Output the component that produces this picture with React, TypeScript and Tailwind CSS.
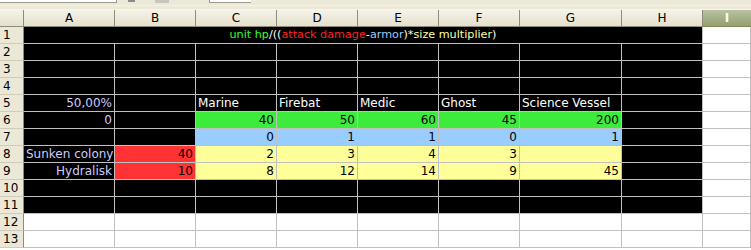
import React from "react";

type C = { t?: string; bg?: string; fg?: string; r?: boolean };

const BLACK = "bg-black";
const GREEN = "bg-[#3deb3d]";
const BLUE = "bg-[#99ccff]";
const YELLOW = "bg-[#ffff99]";
const RED = "bg-[#ff3333]";
const LAV = "text-[#ccccff]";
const WH = "text-white";
const BK = "text-black";

const blackRow = (): C[] => Array.from({ length: 8 }, () => ({ bg: BLACK }));

const rows: C[][] = [
  [], // row 1 merged title
  blackRow(),
  blackRow(),
  blackRow(),
  [
    { t: "50,00%", bg: BLACK, fg: LAV, r: true },
    { bg: BLACK },
    { t: "Marine", bg: BLACK, fg: WH },
    { t: "Firebat", bg: BLACK, fg: WH },
    { t: "Medic", bg: BLACK, fg: WH },
    { t: "Ghost", bg: BLACK, fg: WH },
    { t: "Science Vessel", bg: BLACK, fg: WH },
    { bg: BLACK },
  ],
  [
    { t: "0", bg: BLACK, fg: LAV, r: true },
    { bg: BLACK },
    { t: "40", bg: GREEN, fg: BK, r: true },
    { t: "50", bg: GREEN, fg: BK, r: true },
    { t: "60", bg: GREEN, fg: BK, r: true },
    { t: "45", bg: GREEN, fg: BK, r: true },
    { t: "200", bg: GREEN, fg: BK, r: true },
    { bg: BLACK },
  ],
  [
    { bg: BLACK },
    { bg: BLACK },
    { t: "0", bg: BLUE, fg: BK, r: true },
    { t: "1", bg: BLUE, fg: BK, r: true },
    { t: "1", bg: BLUE, fg: BK, r: true },
    { t: "0", bg: BLUE, fg: BK, r: true },
    { t: "1", bg: BLUE, fg: BK, r: true },
    { bg: BLACK },
  ],
  [
    { t: "Sunken colony", bg: BLACK, fg: LAV, r: true },
    { t: "40", bg: RED, fg: BK, r: true },
    { t: "2", bg: YELLOW, fg: BK, r: true },
    { t: "3", bg: YELLOW, fg: BK, r: true },
    { t: "4", bg: YELLOW, fg: BK, r: true },
    { t: "3", bg: YELLOW, fg: BK, r: true },
    { bg: YELLOW },
    { bg: BLACK },
  ],
  [
    { t: "Hydralisk", bg: BLACK, fg: LAV, r: true },
    { t: "10", bg: RED, fg: BK, r: true },
    { t: "8", bg: YELLOW, fg: BK, r: true },
    { t: "12", bg: YELLOW, fg: BK, r: true },
    { t: "14", bg: YELLOW, fg: BK, r: true },
    { t: "9", bg: YELLOW, fg: BK, r: true },
    { t: "45", bg: YELLOW, fg: BK, r: true },
    { bg: BLACK },
  ],
  blackRow(),
  blackRow(),
  Array.from({ length: 8 }, () => ({ bg: "bg-white" })),
  Array.from({ length: 8 }, () => ({ bg: "bg-white" })),
];

const GRID =
  "grid grid-cols-[24px_91px_81px_81px_81px_81px_81px_102px_81px_1fr]";
const BASE =
  "h-[17px] border-r border-b border-[#c0c0c0] px-[2px] leading-[16px] whitespace-nowrap overflow-visible";
const CELL = `${BASE} text-[12px]`;
const TITLE = `${BASE} text-[11.2px] col-span-8 bg-black text-center`;
const ROWHEAD =
  "h-[17px] border-r border-r-[#8e8b7c] border-b border-b-[#cfcbb8] bg-[#ebe8d7] pl-[3px] text-[12px] leading-[16px] text-black";

export default function App() {
  const letters = ["A", "B", "C", "D", "E", "F", "G", "H"];
  return (
    <div
      className="w-[751px] h-[250px] overflow-hidden bg-white"
      style={{ fontFamily: '"DejaVu Sans", sans-serif' }}
    >
      {/* toolbar remnant */}
      <div className="relative h-[10px] bg-[#ece9d8] border-b border-[#f6f4ec]">
        <div className="absolute left-0 top-0 w-[117px] h-[3px] bg-white border-b border-r border-[#9a9a90]" />
        <div className="absolute left-[128px] top-0 w-[7px] h-[2px] bg-[#8a8a8a]" />
        <div className="absolute left-[155px] top-0 w-[14px] h-[3px] bg-[#c8c6bc]" />
        <div className="absolute left-[209px] top-0 w-[42px] h-[3px] bg-white border-b border-l border-[#9a9a90]" />
        <div className="absolute left-0 right-0 top-[5px] h-px bg-[#f4f2e8]" />
      </div>
      {/* column headers */}
      <div className={GRID}>
        <div className="h-[17px] bg-gradient-to-b from-[#f5f3ea] to-[#e4e0cc] border-r border-b border-[#8e8b7c]" />
        {letters.map((l) => (
          <div
            key={l}
            className="h-[17px] bg-gradient-to-b from-[#f5f3ea] to-[#e4e0cc] border-r border-b border-[#8e8b7c] text-center text-[12px] leading-[16px] text-black"
          >
            {l}
          </div>
        ))}
        <div className="h-[17px] bg-gradient-to-b from-[#b8c2a0] to-[#94a070] border-b border-[#7d8a5c] text-center text-[12px] leading-[16px] font-bold text-white">
          I
        </div>
      </div>
      {rows.map((row, i) => (
        <div key={i} className={GRID}>
          <div className={ROWHEAD}>{i + 1}</div>
          {i === 0 ? (
            <div className={TITLE}>
              <span className="text-[#33ff33]">unit hp</span>
              <span className="text-white">/((</span>
              <span className="text-[#ff2020]">attack damage</span>
              <span className="text-white">-</span>
              <span className="text-[#99ccff]">armor</span>
              <span className="text-white">)*</span>
              <span className="text-[#ffff99]">size multiplier</span>
              <span className="text-white">)</span>
            </div>
          ) : (
            row.map((c, j) => (
              <div
                key={j}
                className={`${CELL} ${c.bg ?? ""} ${c.fg ?? ""} ${c.r ? "text-right" : "text-left"}`}
              >
                {c.t ?? ""}
              </div>
            ))
          )}
          <div className={`${CELL} bg-white`} />
        </div>
      ))}
    </div>
  );
}
